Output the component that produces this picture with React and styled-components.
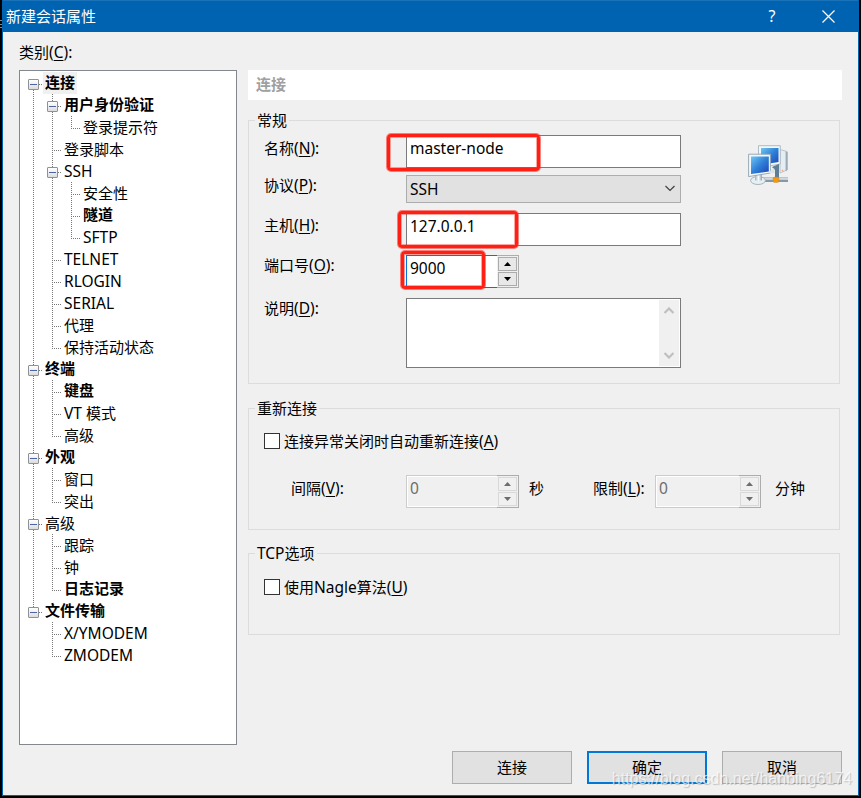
import React from "react";
import styled, { createGlobalStyle, css } from "styled-components";

const GlobalStyle = createGlobalStyle`
  * { box-sizing: border-box; }
  body {
    margin: 0;
    background: #000;
    overflow: hidden;
  }
`;

const Desktop = styled.div`
  position: relative;
  width: 861px;
  height: 798px;
  padding: 0 2px 2px;
  background:
    linear-gradient(#8a8a8a, #8a8a8a) 0 20px / 2px 1px no-repeat,
    linear-gradient(#8a8a8a, #8a8a8a) 0 24px / 2px 1px no-repeat,
    linear-gradient(#8a8a8a, #8a8a8a) 0 27px / 2px 1px no-repeat,
    #000;
  font-family: "Noto Sans", "Noto Sans CJK SC", sans-serif;
  font-size: 15px;
  line-height: 22px;
  color: #000;
`;

const Latin = styled.span`
  font-size: 15.5px;
`;

const Dialog = styled.div`
  display: flex;
  flex-direction: column;
  height: 796px;
  background: #f0f0f0;
  border: 1px solid #0063b1;
  border-top: 0;
`;

const TitleBar = styled.header`
  display: flex;
  align-items: center;
  flex: none;
  height: 32px;
  padding-left: 3px;
  background: #0063b1;
  border-top: 1px solid #1a73b9;
  color: #fff;
`;

const Title = styled.span`
  flex: 1;
  padding-bottom: 2px;
`;

const CaptionButton = styled.button`
  display: flex;
  align-items: center;
  justify-content: center;
  width: 57px;
  height: 31px;
  padding: 0;
  border: 0;
  background: none;
  color: #fff;
  font: inherit;
`;

const HelpButton = styled(CaptionButton)`
  padding: 0 0 2px 1px;
  font-size: 16px;
`;

const CloseButton = styled(CaptionButton)`
  margin-right: 1px;
`;

const Body = styled.main`
  display: flex;
  flex-direction: column;
  flex: 1;
  padding: 9px 16px 0;
`;

const Columns = styled.div`
  display: flex;
  gap: 11px;
  margin-top: 7px;
`;

const AccessKey = styled.span`
  text-decoration: underline;
  text-decoration-thickness: 1px;
  text-underline-offset: 2px;
`;

/* Category tree */

const Tree = styled.div`
  flex: none;
  width: 218px;
  height: 675px;
  padding: 1px 4px;
  background: #fff;
  border: 1px solid #828790;
`;

const TreeRow = styled.div`
  display: flex;
  height: 22px;
`;

const dotsDown = "repeating-linear-gradient(to bottom, #777 0 1px, transparent 1px 2px)";
const dotsAcross = "repeating-linear-gradient(to right, #777 0 1px, transparent 1px 2px)";

const guides = {
  none: css``,
  start: css`
    background: ${dotsDown} 9px 12px / 1px 10px no-repeat,
      ${dotsAcross} 9px 12px / 9px 1px no-repeat;
  `,
  line: css`
    background: ${dotsDown} 9px 0 / 1px 22px no-repeat;
  `,
  tee: css`
    background: ${dotsDown} 9px 0 / 1px 22px no-repeat,
      ${dotsAcross} 9px 12px / 9px 1px no-repeat;
  `,
  end: css`
    background: ${dotsDown} 9px 0 / 1px 12px no-repeat,
      ${dotsAcross} 9px 12px / 9px 1px no-repeat;
  `,
};

const Guide = styled.span`
  flex: none;
  width: 19px;
  padding: 7px 4px 0;
  ${({ $kind }) => guides[$kind]}
`;

const Toggle = styled.span`
  display: flex;
  align-items: center;
  justify-content: center;
  width: 11px;
  height: 11px;
  border: 1px solid #919191;
  border-radius: 1px;
  background: linear-gradient(#fff, #dcdcdc);

  &::after {
    content: "";
    width: 7px;
    height: 1px;
    background: #4b63a7;
  }
`;

const NodeName = styled.span`
  padding: 0 2px;
  white-space: nowrap;
  font-weight: ${({ $bold }) => ($bold ? 700 : 400)};
  line-height: ${({ $bold }) => ($bold ? 20 : 22)}px;
  background: ${({ $selected }) => ($selected ? "#f0f0f0" : "transparent")};
`;

/* Settings page */

const Page = styled.section`
  width: 594px;
`;

const PageHeading = styled.div`
  height: 30px;
  padding: 3px 8px;
  background: #fff;
  color: #a0a0a0;
  font-weight: 600;
`;

const Group = styled.fieldset`
  width: 592px;
  height: ${({ $height }) => $height}px;
  margin: ${({ $gap }) => $gap}px 0 0;
  padding: ${({ $inset }) => $inset}px 0 0 15px;
  border: 1px solid #dcdcdc;
`;

const GroupTitle = styled.legend`
  margin-left: -9px;
  padding: 0 2px;
  height: 19px;
  line-height: 19px;
`;

const GroupContent = styled.div`
  display: flex;
  align-items: flex-start;
`;

const Fields = styled.div`
  width: 417px;
`;

const Field = styled.div`
  display: flex;
  align-items: flex-start;
  margin-top: ${({ $gap }) => $gap || 0}px;
`;

const Label = styled.label`
  width: ${({ $width }) => $width}px;
  margin-top: ${({ $drop }) => ($drop || 0) - 1}px;
  white-space: nowrap;
`;

const Control = styled.div`
  position: relative;
  display: flex;
`;

const TextBox = styled.div`
  width: 275px;
  height: 33px;
  padding: 1px 3px;
  background: #fff;
  border: 1px solid #7a7a7a;
`;

const Select = styled.div`
  display: flex;
  align-items: center;
  justify-content: space-between;
  width: 275px;
  height: 28px;
  padding: 0 5px 1px 3px;
  background: #e1e1e1;
  border: 1px solid #adadad;
`;

const TextArea = styled.div`
  display: flex;
  justify-content: flex-end;
  width: 275px;
  height: 70px;
  padding: 1px;
  background: #fff;
  border: 1px solid #7a7a7a;
`;

const ScrollBar = styled.div`
  display: flex;
  flex-direction: column;
  align-items: center;
  justify-content: space-between;
  width: 20px;
  padding: 7px 1px 7px 0;
  background: #f0f0f0;
`;

const SpinValue = styled.div`
  width: ${({ $width }) => $width}px;
  height: 33px;
  padding: 1px 3px;
  background: ${({ $disabled }) => ($disabled ? "#f0f0f0" : "#fff")};
  border: 1px solid ${({ $disabled }) => ($disabled ? "#ccc" : "#0078d7")};
  border-right: 0;
  box-shadow: ${({ $disabled }) => ($disabled ? "inset 1px 1px #fff, inset 0 -1px #fff" : "none")};
  color: ${({ $disabled }) => ($disabled ? "#6d6d6d" : "#000")};
`;

const SpinButtons = styled.div`
  display: flex;
  flex-direction: column;
  gap: 1px;
  width: 22px;
  height: 33px;
  padding: 1px;
  background: #f0f0f0;
  border: 1px solid #adadad;
  border-left: 0;
`;

const SpinButton = styled.div`
  display: flex;
  flex: 1;
  align-items: center;
  justify-content: center;
  background: ${({ $disabled }) => ($disabled ? "#f0f0f0" : "#e8e8e8")};
  border: 1px solid ${({ $disabled }) => ($disabled ? "#d9d9d9" : "#acacac")};
`;

const Highlight = styled.div`
  position: absolute;
  left: ${({ $left }) => $left}px;
  top: ${({ $top }) => $top}px;
  width: ${({ $width }) => $width}px;
  height: ${({ $height }) => $height}px;
  border: 3px solid #fe2015;
  border-radius: 4px;
  box-shadow: 0 0 0 1px rgba(254, 32, 21, 0.55), inset 0 0 0 1px rgba(254, 32, 21, 0.4);
`;

const SessionIcon = styled.svg`
  margin: 10px 0 0 67px;
`;

const CheckRow = styled.label`
  display: flex;
  align-items: center;
  gap: 4px;
  height: 22px;
`;

const CheckBox = styled.span`
  width: 16px;
  height: 16px;
  background: #fff;
  border: 1px solid #333;
`;

const Timing = styled.div`
  display: flex;
  align-items: flex-start;
  margin-top: 23px;
  padding-left: 27px;
`;

const Unit = styled.span`
  width: ${({ $width }) => $width}px;
  margin-left: ${({ $gap }) => $gap}px;
  padding-top: 2px;
`;

const Footer = styled.footer`
  display: flex;
  justify-content: flex-end;
  gap: 15px;
  margin-top: 6px;
`;

const Button = styled.button`
  width: 120px;
  height: 33px;
  padding: 0 0 2px;
  font: inherit;
  color: #000;
  background: #e1e1e1;
  border: ${({ $primary }) => ($primary ? "2px solid #0078d7" : "1px solid #adadad")};
`;

const Watermark = styled.div`
  position: absolute;
  right: 9px;
  bottom: 8px;
  font-family: "Liberation Sans", Arial, sans-serif;
  font-size: 16px;
  white-space: nowrap;
  color: rgba(255, 255, 255, 0.7);
  text-shadow: 1px 1px 1px rgba(0, 0, 0, 0.2);
`;

const treeRows = [
  { name: "连接", g: ["start"], open: true, bold: true, selected: true },
  { name: "用户身份验证", g: ["line", "tee"], open: true, bold: true },
  { name: "登录提示符", g: ["line", "line", "end"] },
  { name: "登录脚本", g: ["line", "tee"] },
  { name: "SSH", g: ["line", "tee"], open: true },
  { name: "安全性", g: ["line", "line", "tee"] },
  { name: "隧道", g: ["line", "line", "tee"], bold: true },
  { name: "SFTP", g: ["line", "line", "end"] },
  { name: "TELNET", g: ["line", "tee"] },
  { name: "RLOGIN", g: ["line", "tee"] },
  { name: "SERIAL", g: ["line", "tee"] },
  { name: "代理", g: ["line", "tee"] },
  { name: "保持活动状态", g: ["line", "end"] },
  { name: "终端", g: ["tee"], open: true, bold: true },
  { name: "键盘", g: ["line", "tee"], bold: true },
  { name: "VT 模式", g: ["line", "tee"] },
  { name: "高级", g: ["line", "end"] },
  { name: "外观", g: ["tee"], open: true, bold: true },
  { name: "窗口", g: ["line", "tee"] },
  { name: "突出", g: ["line", "end"] },
  { name: "高级", g: ["tee"], open: true },
  { name: "跟踪", g: ["line", "tee"] },
  { name: "钟", g: ["line", "tee"] },
  { name: "日志记录", g: ["line", "end"], bold: true },
  { name: "文件传输", g: ["end"], open: true, bold: true },
  { name: "X/YMODEM", g: ["none", "tee"] },
  { name: "ZMODEM", g: ["none", "end"] },
];

// Sets the Latin runs of a mixed string slightly larger than the Chinese ones.
function Mixed({ children }) {
  return children
    .split(/([\x20-\x7e]+)/)
    .filter(Boolean)
    .map((run, i) => (/^[\x20-\x7e]/.test(run) ? <Latin key={i}>{run}</Latin> : run));
}

function Caption({ text, accessKey, end = ":" }) {
  return (
    <span>
      <Mixed>{text}</Mixed>
      <Latin>(<AccessKey>{accessKey}</AccessKey>){end}</Latin>
    </span>
  );
}

function Chevron({ up, width = 10, color = "#404040", weight = 1.2 }) {
  return (
    <svg width={width} height="7" viewBox="0 0 10 7" fill="none" stroke={color} strokeWidth={weight}>
      <path d={up ? "M.5 6 5 1.5 9.500 6" : "M.5 1 5 5.500 9.500 1"} />
    </svg>
  );
}

function Arrow({ up, disabled }) {
  return (
    <svg width="7" height="4" viewBox="0 0 7 4" fill={disabled ? "#6d6d6d" : "#000"}>
      <path d={up ? "M0 4 3.500 0 7 4z" : "M0 0 3.500 4 7 0z"} />
    </svg>
  );
}

function Spinner({ value, width, disabled, children }) {
  return (
    <Control>
      <SpinValue $width={width - 22} $disabled={disabled}><Mixed>{value}</Mixed></SpinValue>
      <SpinButtons>
        <SpinButton $disabled={disabled}><Arrow up disabled={disabled} /></SpinButton>
        <SpinButton $disabled={disabled}><Arrow disabled={disabled} /></SpinButton>
      </SpinButtons>
      {children}
    </Control>
  );
}

function NetworkIcon() {
  return (
    <SessionIcon width="41" height="41" viewBox="0 0 41 41">
      <defs>
        <linearGradient id="screen" x1="0" y1="0" x2="1" y2="1">
          <stop offset="0" stopColor="#6fc6f2" />
          <stop offset=".5" stopColor="#2f7fd8" />
          <stop offset="1" stopColor="#1c44b4" />
        </linearGradient>
        <linearGradient id="metal" x1="0" y1="0" x2="1" y2="0">
          <stop offset="0" stopColor="#9fb2bd" />
          <stop offset=".5" stopColor="#fafcfd" />
          <stop offset="1" stopColor="#8fa3b0" />
        </linearGradient>
      </defs>
      <path d="M32 4.500 39 6.500V25L32 28z" fill="#e4edf1" stroke="#adbac2" strokeWidth=".8" />
      <path d="M37.600 6.500V26L39.600 25V7z" fill="#9babb6" />
      <path d="M10.500.700H32.300V19L10.500 23z" fill="#f2f7f9" stroke="#a7b5bd" strokeWidth=".9" />
      <path d="M13 3H30.500V17L13 20z" fill="url(#screen)" />
      <path d="M24 22 31 19V34H27V25z" fill="#5f7d95" />
      <rect x="14" y="32.500" width="26" height="4.500" fill="#8498a7" />
      <rect x="14" y="33.200" width="26" height="1.500" fill="#dfe8ed" />
      <ellipse cx="10" cy="35.500" rx="7.400" ry="4" fill="#e7eff3" stroke="#9cafba" strokeWidth=".9" />
      <path d="M7 29H14V35.500H7z" fill="url(#metal)" />
      <path d="M.600 9.200H22.400V28L.600 31.600z" fill="#f2f7f9" stroke="#8fa3af" strokeWidth=".9" />
      <path d="M3 11.500H20.800V26.500L3 29z" fill="url(#screen)" />
      <path d="M20 28 26 23 27 28z" fill="#d9e3e8" />
      <rect x="25.200" y="32.300" width="5.600" height="5" rx="1" fill="#f59a0b" stroke="#d18a2c" strokeWidth=".7" />
      <circle cx="34.500" cy="25.500" r=".8" fill="#e8a382" />
    </SessionIcon>
  );
}

export default function App() {
  return (
    <Desktop>
      <GlobalStyle />
      <Dialog>
        <TitleBar>
          <Title>新建会话属性</Title>
          <HelpButton>?</HelpButton>
          <CloseButton>
            <svg width="13" height="13" viewBox="0 0 13 13" stroke="#fff" strokeWidth="1.2">
              <path d="M.5.5 12.500 12.500M12.500.5.5 12.500" />
            </svg>
          </CloseButton>
        </TitleBar>
        <Body>
          <Caption text="类别" accessKey="C" />
          <Columns>
            <Tree>
              {treeRows.map((row, i) => (
                <TreeRow key={i}>
                  {row.g.map((kind, depth) => (
                    <Guide key={depth} $kind={kind}>
                      {row.open && depth === row.g.length - 1 && <Toggle />}
                    </Guide>
                  ))}
                  <NodeName $bold={row.bold} $selected={row.selected}>
                    <Mixed>{row.name}</Mixed>
                  </NodeName>
                </TreeRow>
              ))}
            </Tree>
            <Page>
              <PageHeading>连接</PageHeading>
              <Group $height={273} $gap={11} $inset={5}>
                <GroupTitle>常规</GroupTitle>
                <GroupContent>
                  <Fields>
                    <Field>
                      <Label $width={142} $drop={3}><Caption text="名称" accessKey="N" /></Label>
                      <Control>
                        <TextBox><Mixed>master-node</Mixed></TextBox>
                        <Highlight $left={-19} $top={-1} $width={153} $height={37} />
                      </Control>
                    </Field>
                    <Field $gap={7}>
                      <Label $width={142}><Caption text="协议" accessKey="P" /></Label>
                      <Select><Mixed>SSH</Mixed><Chevron /></Select>
                    </Field>
                    <Field $gap={10}>
                      <Label $width={142} $drop={2}><Caption text="主机" accessKey="H" /></Label>
                      <Control>
                        <TextBox><Mixed>127.0.0.1</Mixed></TextBox>
                        <Highlight $left={-8} $top={-2} $width={120} $height={37} />
                      </Control>
                    </Field>
                    <Field $gap={9}>
                      <Label $width={142}><Caption text="端口号" accessKey="O" /></Label>
                      <Spinner value="9000" width={113}>
                        <Highlight $left={-5} $top={-4} $width={84} $height={38} />
                      </Spinner>
                    </Field>
                    <Field $gap={10}>
                      <Label $width={142}><Caption text="说明" accessKey="D" /></Label>
                      <TextArea>
                        <ScrollBar>
                          <Chevron up color="#bfbfbf" weight={2.2} />
                          <Chevron color="#bfbfbf" weight={2.2} />
                        </ScrollBar>
                      </TextArea>
                    </Field>
                  </Fields>
                  <NetworkIcon />
                </GroupContent>
              </Group>
              <Group $height={131} $gap={15} $inset={12}>
                <GroupTitle>重新连接</GroupTitle>
                <CheckRow>
                  <CheckBox />
                  <Caption text="连接异常关闭时自动重新连接" accessKey="A" end="" />
                </CheckRow>
                <Timing>
                  <Label $width={115} $drop={3}><Caption text="间隔" accessKey="V" /></Label>
                  <Spinner value="0" width={113} disabled />
                  <Unit $gap={10} $width={64}>秒</Unit>
                  <Label $width={62} $drop={3}><Caption text="限制" accessKey="L" /></Label>
                  <Spinner value="0" width={106} disabled />
                  <Unit $gap={14} $width={32}>分钟</Unit>
                </Timing>
              </Group>
              <Group $height={91} $gap={14} $inset={13}>
                <GroupTitle><Mixed>TCP选项</Mixed></GroupTitle>
                <CheckRow>
                  <CheckBox />
                  <Caption text="使用Nagle算法" accessKey="U" end="" />
                </CheckRow>
              </Group>
            </Page>
          </Columns>
          <Footer>
            <Button>连接</Button>
            <Button $primary>确定</Button>
            <Button>取消</Button>
          </Footer>
        </Body>
      </Dialog>
      <Watermark>https://blog.csdn.net/hanbing6174</Watermark>
    </Desktop>
  );
}
